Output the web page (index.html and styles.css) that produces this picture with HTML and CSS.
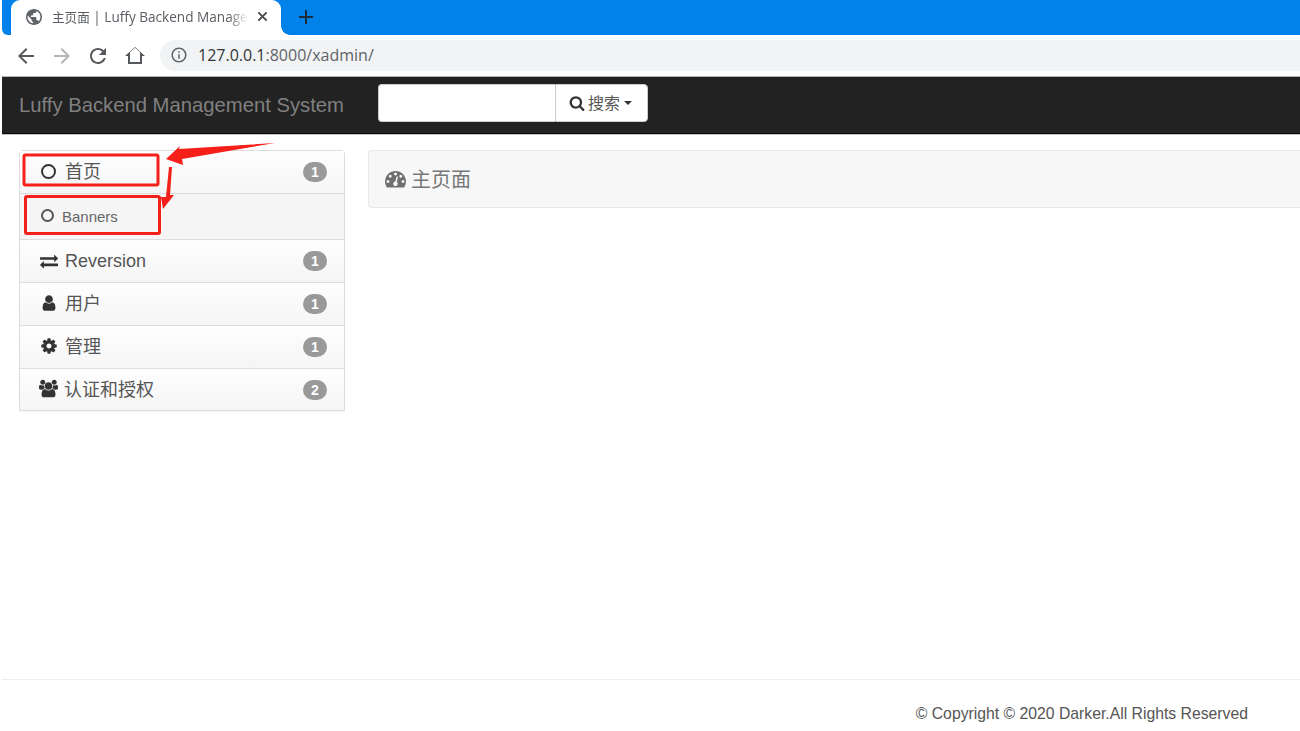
FILE: index.html
```html
<!DOCTYPE html>
<html lang="zh">
<head>
<meta charset="utf-8">
<title>主页面 | Luffy Backend Management System</title>
<link rel="stylesheet" href="styles.css">
</head>
<body>
<div class="tabstrip">
  <div class="tab">
    <svg class="tab-globe" viewBox="2 2 20 20"><path d="M12 2C6.48 2 2 6.48 2 12s4.48 10 10 10 10-4.48 10-10S17.52 2 12 2zm-1 17.93c-3.95-.49-7-3.85-7-7.93 0-.62.08-1.21.21-1.79L9 15v1c0 1.1.9 2 2 2v1.93zm6.9-2.54c-.26-.81-1-1.39-1.9-1.39h-1v-3c0-.55-.45-1-1-1H8v-2h2c.55 0 1-.45 1-1V7h2c1.1 0 2-.9 2-2v-.41c2.93 1.19 5 4.06 5 7.41 0 2.08-.8 3.97-2.1 5.39z"/></svg>
    <span class="tab-title"><span class="tab-cjk">主页面</span> | Luffy Backend Management System</span>
    <svg class="tab-close" viewBox="0 0 12 12"><path d="M1.500 1.500l9 9M10.500 1.500l-9 9"/></svg>
  </div>
  <svg class="new-tab" viewBox="0 0 14 14"><path d="M7 0v14M0 7h14"/></svg>
</div>
<div class="toolbar">
  <svg class="tool" viewBox="0 0 24 24"><path d="M20 11H7.830l5.590-5.590L12 4l-8 8 8 8 1.410-1.410L7.830 13H20v-2z"/></svg>
  <svg class="tool tool-off" viewBox="0 0 24 24"><path d="M12 4l-1.410 1.410L16.170 11H4v2h12.170l-5.580 5.590L12 20l8-8z"/></svg>
  <svg class="tool" viewBox="0 0 24 24"><path d="M17.650 6.350C16.200 4.900 14.210 4 12 4c-4.420 0-7.990 3.580-7.990 8s3.570 8 7.990 8c3.730 0 6.840-2.550 7.730-6h-2.080c-.820 2.330-3.040 4-5.650 4-3.310 0-6-2.690-6-6s2.690-6 6-6c1.660 0 3.140.690 4.220 1.780L13 11h7V4l-2.350 2.350z"/></svg>
  <svg class="tool tool-home" viewBox="0 0 24 24"><path d="M12 3L2 12h3v8h14v-8h3L12 3zm5 15H7v-9.800l5-4.500 5 4.500V18z"/></svg>
  <div class="omnibox">
    <svg class="info" viewBox="0 0 24 24"><path d="M11 7h2v2h-2zm0 4h2v6h-2zm1-9C6.480 2 2 6.480 2 12s4.480 10 10 10 10-4.480 10-10S17.520 2 12 2zm0 18c-4.410 0-8-3.590-8-8s3.590-8 8-8 8 3.590 8 8-3.590 8-8 8z"/></svg>
    <span class="url"><span class="url-host">127.0.0.1</span>:8000/xadmin/</span>
  </div>
</div>
<header class="navbar">
  <span class="brand">Luffy Backend Management System</span>
  <form class="search">
    <input class="search-input" type="text">
    <button class="search-btn" type="button">
      <svg class="search-icon" viewBox="0 0 1792 1792"><path d="M1216 832q0-185-131.500-316.500t-316.500-131.500-316.500 131.500-131.500 316.500 131.500 316.500 316.500 131.500 316.500-131.500 131.500-316.500zm512 832q0 52-38 90t-90 38q-54 0-90-38l-343-342q-179 124-399 124-143 0-273.500-55.500t-225-150-150-225-55.500-273.500 55.500-273.500 150-225 225-150 273.500-55.500 273.500 55.500 225 150 150 225 55.500 273.500q0 220-124 399l343 343q37 37 37 90z"/></svg>
      <span class="search-text">搜索</span><i class="caret"></i>
    </button>
  </form>
</header>
<div class="content">
  <nav class="sidebar">
    <a class="row"><span class="ico ico-up"><i class="ring"></i></span><span class="label cjk">首页</span><b class="badge">1</b></a>
    <a class="row row-sub"><span class="ico ico-up2"><i class="ring ring-sub"></i></span><span class="label label-sub">Banners</span></a>
    <a class="row"><span class="ico"><svg class="fa" viewBox="0 0 1792 1792"><path d="M1792 1184v192q0 13-9.500 22.500t-22.500 9.500h-1376v192q0 13-9.500 22.500t-22.500 9.500q-12 0-24-10l-319-320q-9-9-9-22 0-14 9-23l320-320q9-9 23-9 13 0 22.500 9.500t9.500 22.500v192h1376q13 0 22.500 9.500t9.500 22.500zm0-544q0 14-9 23l-320 320q-9 9-23 9-13 0-22.500-9.500t-9.500-22.500v-192h-1376q-13 0-22.500-9.500t-9.500-22.500v-192q0-13 9.500-22.500t22.500-9.500h1376v-192q0-14 9-23t23-9q12 0 24 10l319 319q9 9 9 23z"/></svg></span><span class="label">Reversion</span><b class="badge">1</b></a>
    <a class="row"><span class="ico ico-up"><svg class="fa" viewBox="0 0 1792 1792"><path d="M1536 1399q0 109-62.500 187t-150.500 78h-854q-88 0-150.500-78t-62.500-187q0-85 8.500-160.500t31.500-152 58.500-131 94-89 134.500-34.500q131 128 313 128t313-128q76 0 134.500 34.500t94 89 58.500 131 31.500 152 8.500 160.500zm-256-887q0 159-112.500 271.500t-271.500 112.500-271.500-112.500-112.500-271.500 112.500-271.500 271.500-112.500 271.500 112.500 112.500 271.500z"/></svg></span><span class="label cjk">用户</span><b class="badge">1</b></a>
    <a class="row"><span class="ico ico-up"><svg class="fa" viewBox="0 0 1792 1792"><path d="M1152 896q0-106-75-181t-181-75-181 75-75 181 75 181 181 75 181-75 75-181zm512-109v222q0 12-8 23t-20 13l-185 28q-19 54-39 91 35 50 107 138 10 12 10 25t-9 23q-27 37-99 108t-94 71q-12 0-26-9l-138-108q-44 23-91 38-16 136-29 186-7 28-36 28h-222q-14 0-24.500-8.500t-11.500-21.500l-28-184q-49-16-90-37l-141 107q-10 9-25 9-14 0-25-11-126-114-165-168-7-10-7-23 0-12 8-23 15-21 51-66.500t54-70.500q-27-50-41-99l-183-27q-13-2-21-12.500t-8-23.500v-222q0-12 8-23t19-13l186-28q14-46 39-92-40-57-107-138-10-12-10-24 0-10 9-23 26-36 98.500-107.500t94.500-71.500q13 0 26 10l138 107q44-23 91-38 16-136 29-186 7-28 36-28h222q14 0 24.500 8.500t11.500 21.500l28 184q49 16 90 37l142-107q9-9 24-9 13 0 25 10 129 119 165 170 7 8 7 22 0 12-8 23-15 21-51 66.500t-54 70.500q26 50 41 98l183 28q13 2 21 12.500t8 23.500z"/></svg></span><span class="label cjk">管理</span><b class="badge">1</b></a>
    <a class="row row-last"><span class="ico ico-up"><svg class="fa fa-users" viewBox="0 0 1920 1792"><path d="M593 896q-162 5-265 128h-134q-82 0-138-40.500t-56-118.500q0-353 124-353 6 0 43.500 21t97.500 42.500 119 21.500q67 0 133-23-5 37-5 66 0 139 81 256zm1071 637q0 120-73 189.500t-194 69.500h-874q-121 0-194-69.500t-73-189.500q0-53 3.500-103.500t14-109 26.500-108.500 43-97.500 62-81 85.500-53.500 111.500-20q10 0 43 21.500t73 48 107 48 135 21.500 135-21.500 107-48 73-48 43-21.500q61 0 111.500 20t85.500 53.500 62 81 43 97.500 26.500 108.500 14 109 3.500 103.500zm-1024-1277q0 106-75 181t-181 75-181-75-75-181 75-181 181-75 181 75 75 181zm704 384q0 159-112.500 271.500t-271.500 112.500-271.500-112.500-112.500-271.500 112.500-271.500 271.500-112.500 271.500 112.500 112.500 271.500zm576 225q0 78-56 118.500t-138 40.500h-134q-103-123-265-128 81-117 81-256 0-29-5-66 66 23 133 23 59 0 119-21.500t97.500-42.500 43.500-21q124 0 124 353zm-128-609q0 106-75 181t-181 75-181-75-75-181 75-181 181-75 181 75 75 181z"/></svg></span><span class="label cjk label-wide">认证和授权</span><b class="badge">2</b></a>
  </nav>
  <main class="main">
    <div class="page-head">
      <svg class="dash" viewBox="0 0 1792 1792"><path d="M384 1152q0-53-37.500-90.500t-90.500-37.500-90.500 37.500-37.500 90.500 37.500 90.500 90.500 37.500 90.500-37.500 37.500-90.500zm192-448q0-53-37.500-90.500t-90.500-37.500-90.500 37.500-37.500 90.500 37.500 90.500 90.500 37.500 90.500-37.500 37.500-90.500zm428 481l101-382q6-26-7.500-48.500t-38.500-29.500-48 6.500-30 39.500l-101 382q-60 5-107 43.500t-63 98.500q-20 77 20 146t117 89 146-20 89-117q16-60-6-117t-72-91zm660-33q0-53-37.500-90.500t-90.500-37.500-90.500 37.500-37.500 90.500 37.500 90.500 90.500 37.500 90.500-37.500 37.500-90.500zm-640-640q0-53-37.500-90.500t-90.500-37.500-90.500 37.500-37.500 90.500 37.500 90.500 90.500 37.500 90.500-37.500 37.500-90.500zm448 192q0-53-37.500-90.500t-90.500-37.500-90.500 37.500-37.500 90.500 37.500 90.500 90.500 37.500 90.500-37.500 37.500-90.500zm320 448q0 261-141 483-19 29-54 29h-1402q-35 0-54-29-141-221-141-483 0-182 71-348t191-286 286-191 348-71 348 71 286 191 191 286 71 348z"/></svg>
      <span class="head-text">主页面</span>
    </div>
  </main>
</div>
<footer class="footer">© Copyright © 2020 Darker.All Rights Reserved</footer>
<svg class="annotations" viewBox="0 0 1300 731">
  <rect class="mark" x="24" y="155" width="134" height="30" rx="1.500"/>
  <rect class="mark" x="25.500" y="196.500" width="134" height="37" rx="1.500"/>
  <path class="arrow" d="M275 143L179 149 180 146 166 159 183 165 182 159Z"/>
  <path class="arrow" d="M172 167L170 195 174 195 163 209 161 197 166 197 169 167Z"/>
</svg>
</body>
</html>
```
FILE: styles.css
```css
* { box-sizing: border-box; }
html, body { margin: 0; height: 731px; overflow: hidden; background: #fff; }
body {
  position: relative;
  padding-left: 2px;
  font-family: "Liberation Sans", "Noto Sans CJK SC", sans-serif;
  color: #555;
}

/* browser chrome */
.tabstrip {
  display: flex;
  align-items: center;
  height: 35px;
  padding-left: 9px;
  background: #0082ea;
  border-bottom-left-radius: 6px;
}
.tab {
  position: relative;
  display: flex;
  align-items: center;
  width: 270px;
  height: 35px;
  padding: 0 13px 0 15px;
  background: #fff;
  border-radius: 9px 9px 0 0;
}
.tab::after {
  content: "";
  position: absolute;
  right: -9px;
  bottom: 0;
  width: 9px;
  height: 9px;
  background: radial-gradient(circle at 100% 0, transparent 8.500px, #fff 9px);
}
.tab-globe { width: 16px; height: 16px; fill: #5f6368; flex: none; margin-top: -2px; }
.tab-title {
  flex: 1;
  min-width: 0;
  margin-left: 10px;
  margin-top: -2px;
  font: 13.600px "Open Sans", "Noto Sans CJK SC", sans-serif;
  color: #5a5e63;
  white-space: nowrap;
  overflow: hidden;
  -webkit-mask-image: linear-gradient(to right, #000 90%, transparent 100%);
  mask-image: linear-gradient(to right, #000 90%, transparent 100%);
}
.tab-cjk { font-size: 12.600px; }
.tab-close { width: 11px; height: 11px; margin-left: 9px; stroke: #4a4d51; stroke-width: 2.200; fill: none; flex: none; margin-top: -2px; }
.new-tab { width: 14px; height: 14px; margin-left: 18px; margin-top: -2px; stroke: #1d2a3a; stroke-width: 2; fill: none; }

.toolbar {
  display: flex;
  align-items: center;
  height: 41px;
  padding-left: 12px;
  background: #fff;
}
.tool { width: 24px; height: 24px; margin-right: 12px; fill: #55585c; flex: none; }
.tool-off { fill: #b4b6b9; }
.tool-home { margin-left: 1px; margin-right: 11px; }
.omnibox {
  flex: 1;
  display: flex;
  align-items: center;
  height: 31px;
  margin-left: 2px;
  margin-top: -1px;
  padding-left: 10px;
  background: #f1f3f4;
  border-radius: 16px 0 0 16px;
}
.info { width: 18px; height: 18px; fill: #5f6368; flex: none; }
.url { margin-left: 10px; font: 16px "Open Sans", sans-serif; color: #5f6368; }
.url-host { color: #33363a; }

/* navbar */
.navbar {
  display: flex;
  align-items: center;
  height: 58px;
  padding-left: 17px;
  background: #222;
  border-top: 1px solid #b5b5b5;
  border-bottom: 1px solid #080808;
  box-shadow: 0 1px 0 #c4c4c4;
}
.brand { width: 359px; font-size: 20.250px; color: #808080; white-space: nowrap; }
.search { display: flex; height: 38px; margin-top: -5px; }
.search-input {
  width: 177px;
  height: 38px;
  padding: 0;
  border: 1px solid #ccc;
  border-right: 0;
  border-radius: 4px 0 0 4px;
  background: #fff;
}
.search-btn {
  display: flex;
  align-items: center;
  width: 93px;
  height: 38px;
  padding: 0 0 0 13px;
  border: 1px solid #ccc;
  border-radius: 0 4px 4px 0;
  background: #fff;
  font: 16px "Liberation Sans", "Noto Sans CJK SC", sans-serif;
  color: #555;
}
.search-icon { width: 16px; height: 16px; fill: #333; margin-right: 3px; }
.search-text { margin-top: -2px; }
.caret {
  width: 0;
  height: 0;
  margin-left: 4px;
  border-top: 4.500px solid #333;
  border-left: 4.500px solid transparent;
  border-right: 4.500px solid transparent;
}

/* body */
.content { display: flex; align-items: flex-start; padding: 16px 0 0 17px; height: 545px; }
.sidebar {
  flex: none;
  width: 326px;
  border: 1px solid #ddd;
  border-radius: 4px 4px 0 0;
  box-shadow: 0 1px 1px rgba(0, 0, 0, .05);
}
.row {
  display: flex;
  align-items: center;
  height: 43px;
  padding: 0 17px 0 19px;
  background: linear-gradient(#fefefe, #f5f5f5);
  border-bottom: 1px solid #ddd;
  color: #555;
}
.row-last { height: 41px; border-bottom: 0; }
.row-sub { height: 46px; background: #f5f5f5; }
.ico { display: flex; justify-content: center; align-items: center; width: 19px; margin-right: 7px; }
.ico-up { margin-bottom: 2px; }
.ico-up2 { margin-bottom: 2px; margin-left: -1px; margin-right: 8px; }
.label { flex: 1; font-size: 18px; }
.cjk { padding-bottom: 4px; }
.label-wide { margin-left: -1px; }
.label-sub { font-size: 15px; margin-left: -3px; padding-bottom: 1px; color: #666; }
.badge {
  width: 24px;
  height: 20px;
  border-radius: 10px;
  background: #999;
  color: #fff;
  font-size: 14px;
  line-height: 20px;
  text-align: center;
}
.ring { width: 15px; height: 15px; border: 2.500px solid #333; border-radius: 50%; }
.ring-sub { width: 13px; height: 13px; border-width: 2px; border-color: #555; }
.fa { width: 18px; height: 18px; fill: #333; }
.fa-users { width: 20px; height: 19px; }

.main { flex: 1; padding-left: 23px; }
.page-head {
  display: flex;
  align-items: center;
  height: 58px;
  padding-left: 16px;
  background: #f7f7f7;
  border: 1px solid #e7e7e7;
  border-right: 0;
  border-radius: 4px 0 0 4px;
  font-size: 20px;
  color: #777;
}
.dash { width: 21px; height: 21px; fill: #6f6f6f; margin-right: 5px; margin-top: -1px; }
.head-text { padding-bottom: 2px; }

.footer {
  height: 52px;
  padding: 24px 52px 0 0;
  border-top: 1px solid #eee;
  text-align: right;
  font-size: 15.750px;
  line-height: 20px;
  color: #555;
}

/* red annotations drawn over the screenshot */
.annotations { position: absolute; left: 0; top: 0; width: 1300px; height: 731px; pointer-events: none; }
.mark { fill: none; stroke: #f5201a; stroke-width: 3; }
.arrow { fill: #f5201a; }
```
